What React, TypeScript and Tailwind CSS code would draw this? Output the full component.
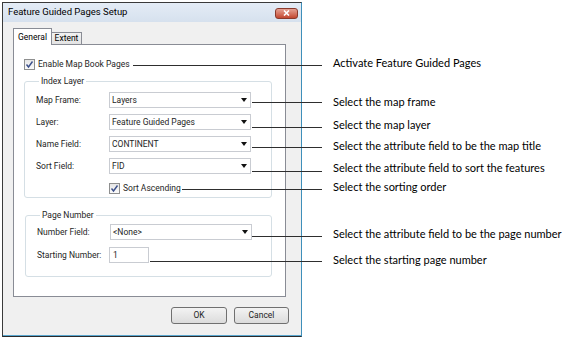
const notes = [
  { line: 65, from: 133, y: 63, text: "Activate Feature Guided Pages" },
  { line: 102, from: 252, y: 102, text: "Select the map frame" },
  { line: 127, from: 252, y: 125, text: "Select the map layer" },
  { line: 147, from: 252, y: 146, text: "Select the attribute field to be the map title" },
  { line: 171, from: 252, y: 168, text: "Select the attribute field to sort the features" },
  { line: 189, from: 182, y: 187, text: "Select the sorting order" },
  { line: 236, from: 252, y: 234, text: "Select the attribute field to be the page number" },
  { line: 261, from: 150, y: 260, text: "Select the starting page number" },
];

function Check() {
  return (
    <span className="flex h-[11px] w-[11px] shrink-0 items-center justify-center border border-[#8e8f8f] bg-gradient-to-b from-[#e6e6e6] to-[#fbfbfb]">
      <svg width="9" height="9" viewBox="0 0 9 9">
        <path d="M1.5 4.5 L3.5 7 L7.5 1.5" fill="none" stroke="#3b4f8a" strokeWidth="1.4" />
      </svg>
    </span>
  );
}

function Combo({ value }: { value: string }) {
  return (
    <div className="flex h-[16px] w-[142px] items-center justify-between border border-[#c9ccd2] bg-white pl-[2px] pr-[3px]">
      <span className="leading-none">{value}</span>
      <svg width="6" height="4" viewBox="0 0 6 4">
        <path d="M0 0 H6 L3 4 Z" fill="#111" />
      </svg>
    </div>
  );
}

function Row({ label, value }: { label: string; value: string }) {
  return (
    <div className="flex items-center">
      <span className="w-[73px] shrink-0">{label}</span>
      <Combo value={value} />
    </div>
  );
}

export default function App() {
  return (
    <div className="relative h-[340px] w-[566px] overflow-hidden bg-white font-['Roboto',sans-serif] text-[8.5px] text-[#1e1e1e]">
      <div className="ml-[2px] mt-[2px] flex h-[335px] w-[300px] flex-col border border-[#3a3a3a] border-r-[#3e8fba] border-b-[#2a2a2a] bg-[#f0f0f0] shadow-[inset_0_-1px_0_#5aa7cf]">
        {/* title bar */}
        <div className="flex h-[19px] items-center justify-between bg-gradient-to-b from-[#e4ecf6] to-[#d6e1ee] pl-[5px] pr-[3px]">
          <span className="text-[9.5px] text-black">Feature Guided Pages Setup</span>
          <div className="mt-[1px] flex h-[11px] w-[23px] items-center justify-center rounded-[3px] border border-[#8a3a2c] bg-gradient-to-b from-[#e5a193] to-[#c2462f]">
            <svg width="7" height="6" viewBox="0 0 7 6">
              <path d="M1 0.5 L6 5.5 M6 0.5 L1 5.5" stroke="#fff" strokeWidth="1.6" />
            </svg>
          </div>
        </div>

        {/* tabs */}
        <div className="mt-[6px] flex items-end pl-[10px]">
          <div className="relative z-10 -mb-px flex h-[17px] w-[39px] items-start justify-center border border-b-0 border-[#898c95] bg-white pt-[2px] text-black">
            General
          </div>
          <div className="flex h-[12px] w-[30px] items-center justify-center border border-l-0 border-b-0 border-[#898c95] bg-gradient-to-b from-[#f2f2f2] to-[#e3e3e3] text-black">
            Extent
          </div>
        </div>

        {/* panel */}
        <div className="ml-[10px] flex h-[253px] w-[273px] flex-col border border-[#898c95] bg-white">
          <div className="ml-[10px] mt-[13px] flex h-[12px] items-center gap-[3px]">
            <Check />
            <span>Enable Map Book Pages</span>
          </div>

          <fieldset className="ml-[10px] mt-[6px] w-[248px] rounded-[3px] border border-[#d5dfe5] pb-[3px] pl-[11px] pt-[6px]">
            <legend className="ml-[3px] px-[2px] leading-[10px]">Index Layer</legend>
            <div className="flex flex-col gap-[6px]">
              <Row label="Map Frame:" value="Layers" />
              <Row label="Layer:" value="Feature Guided Pages" />
              <Row label="Name Field:" value="CONTINENT" />
              <Row label="Sort Field:" value="FID" />
            </div>
            <div className="ml-[73px] mt-[8px] flex h-[12px] items-center gap-[3px]">
              <Check />
              <span>Sort Ascending</span>
            </div>
          </fieldset>

          <fieldset className="ml-[11px] mt-[12px] w-[247px] rounded-[3px] border border-[#d5dfe5] pb-[13px] pl-[11px] pt-[4px]">
            <legend className="ml-[3px] px-[2px] leading-[10px]">Page Number</legend>
            <Row label="Number Field:" value="<None>" />
            <div className="mt-[7px] flex items-center">
              <span className="w-[72px] shrink-0">Starting Number:</span>
              <div className="flex h-[16px] w-[40px] items-center border border-[#c9ccd2] bg-white pl-[3px] leading-none">1</div>
            </div>
          </fieldset>
        </div>

        {/* buttons */}
        <div className="mt-[10px] flex justify-end gap-[7px] pr-[12px]">
          <button className="h-[17px] w-[56px] rounded-[3px] border border-[#707070] bg-gradient-to-b from-[#f3f3f3] to-[#dcdcdc] leading-none">
            OK
          </button>
          <button className="h-[17px] w-[55px] rounded-[3px] border border-[#707070] bg-gradient-to-b from-[#f3f3f3] to-[#dcdcdc] leading-none">
            Cancel
          </button>
        </div>
      </div>

      {/* callouts */}
      {notes.map((n) => (
        <div key={n.text}>
          <div className="absolute h-px bg-[#2e2e2e]" style={{ top: n.line, left: n.from, width: 322 - n.from }} />
          <div
            className="absolute left-[333px] whitespace-nowrap font-['Lato',sans-serif] text-[11px] leading-[14px] text-black"
            style={{ top: n.y - 7 }}
          >
            {n.text}
          </div>
        </div>
      ))}
    </div>
  );
}
